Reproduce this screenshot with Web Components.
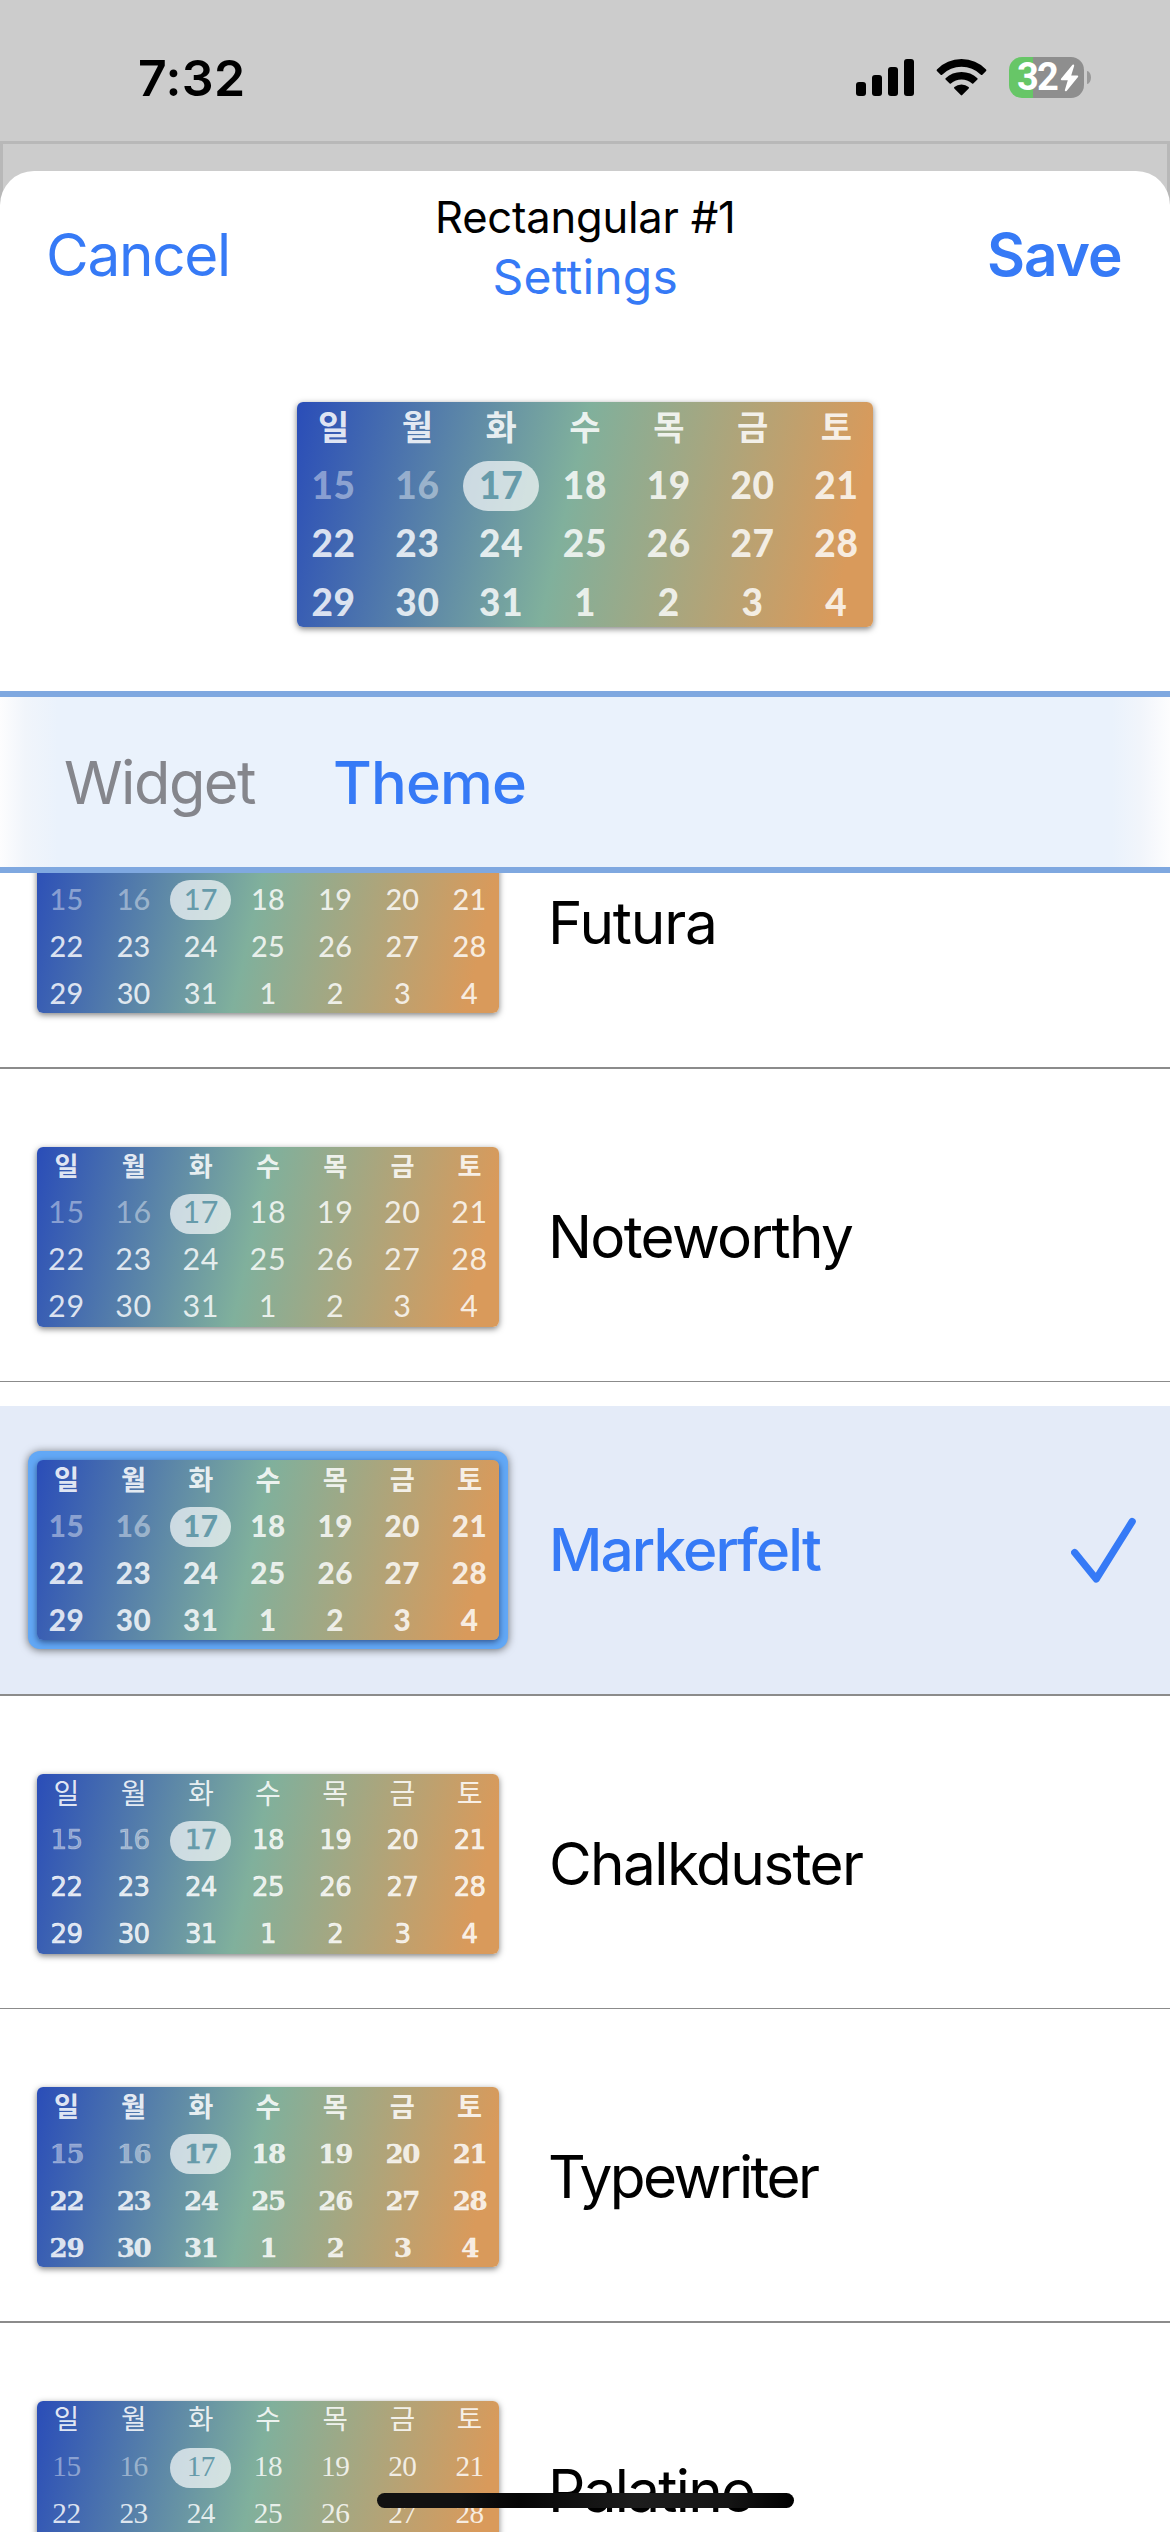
<!DOCTYPE html>
<html lang="ko">
<head>
<meta charset="utf-8">
<title>Rectangular #1</title>
<style>
html,body{margin:0;padding:0}
body{width:1170px;height:2532px;overflow:hidden;background:#ccc;font-family:Inter,"Noto Sans CJK KR",sans-serif;color:#000}
</style>
</head>
<body>
<phone-screen></phone-screen>
<script>
const define=(name,html,setup)=>customElements.define(name,class extends HTMLElement{
  connectedCallback(){
    if(this.shadowRoot)return;
    const t=document.createElement('template');
    t.innerHTML=typeof html==='function'?html(this):html;
    this.attachShadow({mode:'open'}).append(t.content.cloneNode(true));
    if(setup)setup(this);
  }
});

/* A line of text tracked so that its ink spans exactly `w` pixels. */
const pen=document.createElement('canvas').getContext('2d');
define('fit-text',`<style>
:host{display:block;white-space:nowrap;flex:none}
span{display:block}
</style><span><slot></slot></span>`,el=>{
  const s=getComputedStyle(el),w=+el.getAttribute('w'),text=el.textContent;
  pen.font=`${s.fontWeight} ${s.fontSize} ${s.fontFamily}`;
  const m=pen.measureText(text);
  const ink=m.actualBoundingBoxRight+m.actualBoundingBoxLeft;
  const span=el.shadowRoot.querySelector('span');
  el.style.width=w+'px';
  span.style.letterSpacing=(w-ink)/(text.length-1)+'px';
  span.style.marginLeft=m.actualBoundingBoxLeft+'px';
});

define('status-bar',`<style>
:host{display:flex;box-sizing:border-box;height:141px;padding:0 79px 0 140px;justify-content:space-between;align-items:flex-start}
.time{font-size:50px;font-weight:600;line-height:60px;margin-top:48px}
.icons{display:flex;align-items:flex-start;margin-top:57px}
.wifi{margin:2px 22px 0 22px}
.signal{margin-top:2px}
.battery{display:flex;align-items:center;gap:3px}
.cell{display:flex;align-items:center;box-sizing:border-box;width:75px;height:41px;padding-left:9px;gap:2px;border-radius:13px;color:#fff;font-family:Roboto,sans-serif;font-size:38px;font-weight:700;line-height:41px;background:linear-gradient(90deg,#67c667 24px,#8e8e8e 24px)}
.nub{width:4px;height:13px;border-radius:0 4px 4px 0/0 6.5px 6.5px 0;background:#999}
svg{display:block}
</style>
<fit-text class="time" w="103">7:32</fit-text>
<div class="icons">
<svg class="signal" width="58" height="37"><rect y="23" width="10" height="14" rx="3"/><rect x="16" y="16" width="10" height="21" rx="3"/><rect x="32" y="8" width="10" height="29" rx="3"/><rect x="48" width="10" height="37" rx="3"/></svg>
<svg class="wifi" width="51" height="37" viewBox="0 0 51 37"><path d="M.9 10.6Q11 .1 25.5.1T50.1 10.6Q50.7 11.3 50.1 12L46.1 15.9Q45.6 16.3 44.9 15.7Q36.6 7.8 25.5 7.8T6.1 15.7Q5.4 16.3 4.9 15.9L.9 12Q.3 11.3.9 10.6Z"/><path d="M9.6 19.2Q16.2 12.9 25.5 12.9T41.4 19.2Q42 19.9 41.4 20.5L37.3 24.6Q36.7 25.1 36.1 24.6Q31.4 20.4 25.5 20.4T14.9 24.6Q14.3 25.1 13.7 24.6L9.6 20.5Q9 19.9 9.6 19.2Z"/><path d="M18.4 28Q21.3 25.5 25.5 25.5T32.6 28Q33.4 28.7 32.7 29.4L26.2 36.1Q25.5 36.8 24.8 36.1L18.3 29.4Q17.6 28.7 18.4 28Z"/></svg>
<div class="battery"><div class="cell"><fit-text w="40">32</fit-text><svg width="19" height="28" viewBox="0 0 19 28"><path d="M12.5.7 1 14.7Q.3 16 1.6 16.2H7.8L4.8 26.3Q5 27.9 6.6 27L18 13Q18.9 11.6 17.4 11.4H11.2L14.2 1.8Q14.2 0 12.5.7Z" fill="#fff"/></svg></div><div class="nub"></div></div>
</div>`);

define('sheet-header',`<style>
:host{display:grid;grid-template-columns:1fr auto 1fr;align-items:center;box-sizing:border-box;height:168px;padding:0 49px 0 49px;color:#367af6}
.titles{display:flex;flex-direction:column;align-items:center;margin-bottom:16px}
.name{color:#000;font-size:43.5px;line-height:60.5px}
.sub{font-size:48px;line-height:60.5px}
.btn{font-size:58.5px;line-height:70px}
.save{justify-self:end;font-weight:600}
</style>
<fit-text class="btn" w="178">Cancel</fit-text>
<div class="titles"><fit-text class="name" w="294">Rectangular #1</fit-text><fit-text class="sub" w="181">Settings</fit-text></div>
<fit-text class="btn save" w="132">Save</fit-text>`);

define('tab-bar',`<style>
:host{display:flex;align-items:center;box-sizing:border-box;height:182px;padding-left:65px;gap:79px;border:solid #7fa8e0;border-width:6px 0;background:linear-gradient(90deg,#fdfdfe,#f1f5fb 25px,#eaf2fc 58px,#eaf2fc calc(100% - 58px),#f1f5fb calc(100% - 30px),#fdfdfe);font-size:59.5px;line-height:74px;color:#85868c}
.on{color:#367af6;font-weight:550}
</style><fit-text w="191">Widget</fit-text><fit-text class="on" w="190">Theme</fit-text>`);

/* Month excerpt on a gradient card. --u is the length of one card unit. */
const themes={
  futura:{f:'Lato',s:36,w:500,ls:.3,k:34,kw:700,dy:-1,x:0},
  noteworthy:{f:'Lato',s:38,w:400,ls:.9,k:32.5,kw:700,dy:-4,kd:-2.5,x:0},
  markerfelt:{f:'Lato',s:37,w:900,ls:.7,k:34,kw:700,dy:-1,kd:-2.5,x:0},
  chalkduster:{f:'"DejaVu Sans"',s:32.5,w:400,ls:-.8,k:35,kw:400,dy:-1,kd:-3,x:.7},
  typewriter:{f:'"DejaVu Serif"',s:32.5,w:700,ls:-1.6,k:34,kw:700,dy:0,kd:-3,x:.4},
  palatino:{f:'"Liberation Serif"',s:36.5,w:400,ls:-.6,k:34.5,kw:400,dy:-3,kd:-5,x:0}
};
define('calendar-card',el=>{
  const t=themes[el.getAttribute('theme')];
  const days=[...'일월화수목금토'].map(d=>`<b>${el.hasAttribute('headless')?'':d}</b>`).join('');
  const weeks=+(el.getAttribute('weeks')||3);
  const dates=[15,16,17,18,19,20,21,22,23,24,25,26,27,28,29,30,31,1,2,3,4].slice(0,weeks*7)
    .map((d,i)=>`<i class="${i<2?'past':i==2?'today':''}"><span>${d}</span></i>`).join('');
  return `<style>
:host{--u:.802px;display:grid;flex:none;box-sizing:border-box;width:462px;height:180px;padding-top:calc(var(--u)*.5);border-radius:6px;grid-template-columns:repeat(7,calc(var(--u)*76));grid-auto-rows:calc(var(--u)*50);gap:calc(var(--u)*8.4) calc(var(--u)*7.8);justify-content:center;background:linear-gradient(102.8deg,#2a4db8 0%,#80b09c 46.8%,#d99a5b 93.4%);box-shadow:0 2px 6px rgba(0,0,0,.5);text-align:center;line-height:calc(var(--u)*50)}
:host([large]){--u:1px;width:576px;height:225px}
b{font-family:"Noto Sans CJK KR",sans-serif;font-size:calc(var(--u)*${t.k});font-weight:${t.kw};color:rgba(255,255,255,.87);transform:translateY(calc(var(--u)*${t.kd||0}))}
i{font-style:normal;font-family:${t.f},sans-serif;font-size:calc(var(--u)*${t.s});font-weight:${t.w};letter-spacing:calc(var(--u)*${t.ls});color:rgba(255,255,255,.82);-webkit-text-stroke:${t.x}px}
span{display:block;transform:translateY(calc(var(--u)*${t.dy}))}
.past{color:rgba(255,255,255,.42)}
.today{background:rgba(255,255,255,.68);border-radius:calc(var(--u)*25);color:#669baa}
</style>${days}${dates}`;
});

define('theme-row',el=>{
  const on=el.hasAttribute('selected');
  return `<style>
:host{display:block;flex:none;box-sizing:content-box;height:312px;border-bottom:2px solid #8b8b8b}
:host([thin]){border-bottom-width:1px}
.row{display:flex;box-sizing:border-box;height:312px;padding:78px 34px 54px 37px;align-items:center}
:host([selected]) .row{height:288px;margin-top:24px;padding-top:54px;background:#e4ebf8}
:host([selected]){display:flow-root;color:#367af6;font-weight:500}
:host([selected]) calendar-card{box-shadow:0 2px 6px rgba(0,0,40,.5)}
.frame{flex:none;border-radius:12px}
:host([selected]) .frame{margin:-9px;padding:9px;background:#62a8f6;box-shadow:0 1px 8px rgba(0,0,0,.55)}
.label{display:block;margin-left:${el.getAttribute('gap')||54}px;font-size:58.5px;line-height:74px}
svg{display:block;margin-left:auto;flex:none}
</style><div class="row"><div class="frame"><calendar-card theme="${el.textContent.toLowerCase()}" weeks="${el.getAttribute('weeks')||3}" ${el.hasAttribute('headless')?'headless':''}></calendar-card></div>
<fit-text class="label" w="${el.getAttribute('w')}">${el.textContent}</fit-text>
${on?'<svg width="65" height="66" viewBox="0 0 65 66" fill="none" stroke="#367af6" stroke-width="7.2" stroke-linecap="round" stroke-linejoin="round"><path d="M3.7 35.5 25.2 62 61.2 4.5"/></svg>':''}</div>`;
});

define('home-indicator',`<style>
:host{position:absolute;left:377px;top:2493px;width:417px;height:15px;border-radius:8px;background:linear-gradient(90deg,#111,#111 20%,#050505 34%,#1d1d1d 62%,#151515 84%,#000)}
</style>`);

define('phone-screen',`<style>
:host{display:flex;flex-direction:column;position:relative;width:1170px;height:2532px;overflow:hidden;background:#ccc}
.behind{flex:1;min-height:0;display:flex;flex-direction:column;padding-top:27px;background:linear-gradient(#b8b8b8,#b8b8b8) 0 0/3px 70px no-repeat,linear-gradient(#b8b8b8,#b8b8b8) 100% 0/3px 70px no-repeat;border-top:3px solid #b8b8b8}
.sheet{flex:1;min-height:0;display:flex;flex-direction:column;background:#fff;border-radius:34px 34px 0 0;overflow:hidden}
.preview{display:flex;justify-content:center;align-items:flex-start;box-sizing:border-box;height:352px;padding-top:63px;flex:none}
sheet-header,tab-bar{flex:none}
.list{flex:1;min-height:0;overflow:hidden;display:flex;flex-direction:column}
.list theme-row:first-child{margin-top:-118px}
</style>
<status-bar></status-bar>
<div class="behind"><div class="sheet">
<sheet-header></sheet-header>
<div class="preview"><calendar-card large theme="markerfelt"></calendar-card></div>
<tab-bar></tab-bar>
<div class="list">
<theme-row headless w="161">Futura</theme-row>
<theme-row thin w="300">Noteworthy</theme-row>
<theme-row selected w="268">Markerfelt</theme-row>
<theme-row thin gap="53" w="311">Chalkduster</theme-row>
<theme-row gap="51" w="269">Typewriter</theme-row>
<theme-row weeks="2" w="201">Palatino</theme-row>
</div></div></div>
<home-indicator></home-indicator>`);
</script>
</body>
</html>
